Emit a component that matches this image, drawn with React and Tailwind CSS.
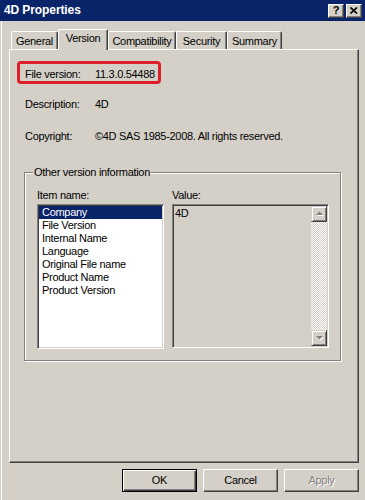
import React from "react";

const tabs = [
  { label: "General", w: "w-[47px]" },
  { label: "Version", w: "w-[50px]", active: true },
  { label: "Compatibility", w: "w-[68px]" },
  { label: "Security", w: "w-[51px]" },
  { label: "Summary", w: "w-[55px]" },
];

const items = [
  "Company",
  "File Version",
  "Internal Name",
  "Language",
  "Original File name",
  "Product Name",
  "Product Version",
];

// classic raised 3D edge
const raised =
  "border border-t-white border-l-white border-r-[#404040] border-b-[#404040] shadow-[inset_-1px_-1px_0_#808080]";
const sunken =
  "border border-t-[#808080] border-l-[#808080] border-r-white border-b-white shadow-[inset_1px_1px_0_#404040,inset_-1px_-1px_0_#d4d0c8]";

const Arrow = ({ down }) => (
  <svg width="9" height="6" viewBox="0 0 9 6" className="block">
    <polygon
      points={down ? "2,2 9,2 5.5,5.5" : "2,5 9,5 5.5,1.5"}
      fill="#ffffff"
    />
    <polygon
      points={down ? "1,1 8,1 4.5,4.5" : "1,4 8,4 4.5,0.5"}
      fill="#808080"
    />
  </svg>
);

const ScrollBtn = ({ down }) => (
  <div className="flex h-[16px] w-[16px] items-center justify-center bg-[#d4d0c8] border border-t-[#d4d0c8] border-l-[#d4d0c8] border-r-[#404040] border-b-[#404040] shadow-[inset_1px_1px_0_#fff,inset_-1px_-1px_0_#808080]">
    <Arrow down={down} />
  </div>
);

const Button = ({ children, isDefault, disabled }) => (
  <div
    className={`flex h-[23px] w-[75px] items-center justify-center bg-[#d4d0c8] ${
      isDefault
        ? "border border-black shadow-[inset_1px_1px_0_#fff,inset_-1px_-1px_0_#404040,inset_-2px_-2px_0_#808080]"
        : raised
    } ${disabled ? "text-[#808080] [text-shadow:1px_1px_0_#fff]" : "text-black"}`}
  >
    {children}
  </div>
);

export default function App() {
  return (
    <div className="relative h-[500px] w-[365px] overflow-hidden bg-[#d4d0c8] font-['Liberation_Sans',Arial,sans-serif] text-[11px] leading-[13px] tracking-[-0.3px] text-black">
      {/* title bar */}
      <div className="flex h-[21px] items-center bg-[#0a246a] pl-[4px] pr-[3px]">
        <span className="text-[12px] font-bold tracking-[-0.1px] text-white">4D Properties</span>
        <div className="ml-auto flex gap-[2px]">
          <div className={`flex h-[14px] w-[16px] items-center justify-center bg-[#d4d0c8] ${raised}`}>
            <span className="font-bold leading-none tracking-normal">?</span>
          </div>
          <div className={`flex h-[14px] w-[16px] items-center justify-center bg-[#d4d0c8] ${raised}`}>
            <svg width="8" height="7" viewBox="0 0 8 7" className="block">
              <path d="M0.5 0.5 L7 6.5 M7 0.5 L0.5 6.5" stroke="#000" strokeWidth="1.7" />
            </svg>
          </div>
        </div>
      </div>

      {/* body */}
      <div className="ml-px h-[479px] border-l border-white pl-[7px] pt-[8px]">
        {/* tabs */}
        <div className="ml-[2px] flex h-[20px] items-end">
          {tabs.map((t) =>
            t.active ? (
              <div
                key={t.label}
                className={`${t.w} relative z-10 -mb-px flex h-[21px] items-center justify-center rounded-t-[2px] border-t border-l border-r border-t-white border-l-white border-r-[#404040] bg-[#d4d0c8] pb-[3px] shadow-[inset_-1px_0_0_#808080]`}
              >
                {t.label}
              </div>
            ) : (
              <div
                key={t.label}
                className={`${t.w} flex h-[18px] items-center justify-center rounded-t-[2px] border-t border-l border-r border-t-white border-l-white border-r-[#404040] bg-[#d4d0c8] pt-px shadow-[inset_-1px_0_0_#808080]`}
              >
                {t.label}
              </div>
            )
          )}
        </div>

        {/* tab panel */}
        <div className={`relative flex h-[414px] w-[350px] flex-col ${raised}`}>
          <div className="ml-[15px] mt-[18px] flex h-[13px]">
            <span className="w-[70px]">File version:</span>
            <span>11.3.0.54488</span>
          </div>
          <div className="ml-[15px] mt-[17px] flex h-[13px]">
            <span className="w-[70px]">Description:</span>
            <span>4D</span>
          </div>
          <div className="ml-[15px] mt-[19px] flex h-[13px]">
            <span className="w-[70px]">Copyright:</span>
            <span>©4D SAS 1985-2008. All rights reserved.</span>
          </div>

          {/* group box */}
          <div className="relative ml-[14px] mt-[29px] h-[189px] w-[317px] border border-[#808080] shadow-[inset_1px_1px_0_#fff,1px_1px_0_#fff]">
            <span className="absolute -top-[7px] left-[8px] bg-[#d4d0c8] px-[1px]">
              Other version information
            </span>
            <div className="ml-[12px] mt-[16px] flex gap-[8px]">
              <div className="flex w-[127px] flex-col">
                <span className="h-[13px]">Item name:</span>
                <div className={`mt-[2px] h-[145px] w-[127px] bg-white p-px ${sunken}`}>
                  {items.map((it, i) => (
                    <div
                      key={it}
                      className={`h-[13px] pl-[3px] ${i === 0 ? "bg-[#0a246a] text-white" : ""}`}
                    >
                      {it}
                    </div>
                  ))}
                </div>
              </div>
              <div className="flex w-[157px] flex-col">
                <span className="h-[13px]">Value:</span>
                <div className={`mt-[2px] flex h-[144px] w-[157px] bg-[#d4d0c8] p-px ${sunken}`}>
                  <div className="flex-1 pl-px pt-px">4D</div>
                  <div className="flex w-[16px] flex-col">
                    <ScrollBtn />
                    <div className="flex-1 bg-[repeating-conic-gradient(#ffffff_0_25%,#d4d0c8_0_50%)] bg-[length:2px_2px]" />
                    <ScrollBtn down />
                  </div>
                </div>
              </div>
            </div>
          </div>

          {/* annotation */}
          <div className="absolute left-[7px] top-[11px] h-[23px] w-[144px] rounded-[4px] border-[3px] border-[#dc1f2b]" />
        </div>

        {/* buttons */}
        <div className="mt-[6px] flex w-[350px] justify-end gap-[6px]">
          <Button isDefault>OK</Button>
          <Button>Cancel</Button>
          <Button disabled>Apply</Button>
        </div>
      </div>
    </div>
  );
}
